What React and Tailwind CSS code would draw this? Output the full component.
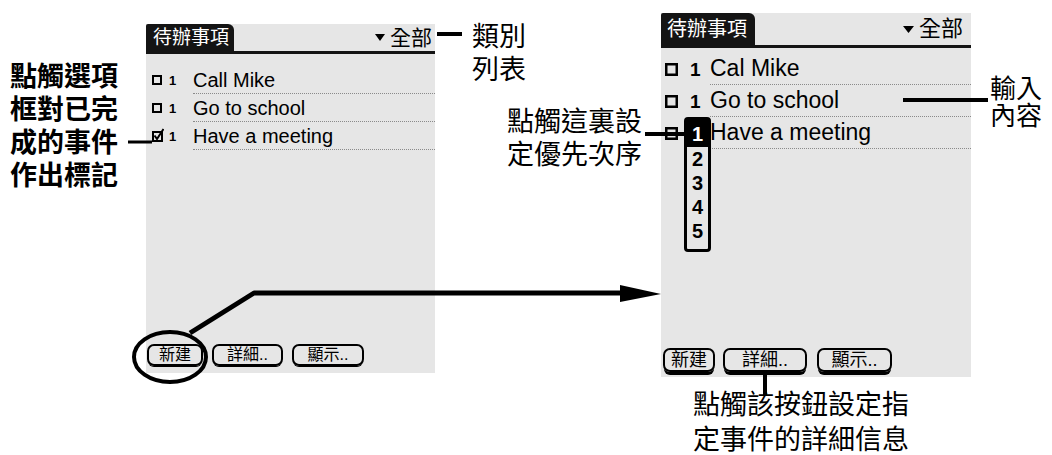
import React from "react";

function Box({ size = 10, stroke = 2 }) {
  return (
    <svg width={size} height={size} viewBox={`0 0 ${size} ${size}`} className="shrink-0">
      <rect x={stroke / 2} y={stroke / 2} width={size - stroke} height={size - stroke} fill="none" stroke="black" strokeWidth={stroke} />
    </svg>
  );
}

function CheckedBox() {
  return (
    <svg width="12" height="14" viewBox="0 0 12 14" className="shrink-0 -mt-[3px]">
      <rect x="1" y="4" width="9" height="9" fill="none" stroke="black" strokeWidth="2" />
      <path d="M2.5 7.5 L5 11 L11.5 1" fill="none" stroke="black" strokeWidth="2" />
    </svg>
  );
}

function Tri({ w = 10, h = 7 }) {
  return (
    <svg width={w} height={h} viewBox={`0 0 ${w} ${h}`} className="shrink-0">
      <path d={`M0 0H${w}L${w / 2} ${h}Z`} fill="black" />
    </svg>
  );
}

function LeftRow({ checked, text }) {
  return (
    <div className="flex items-center h-[28px]">
      <div className="ml-[6px] w-[11px] flex items-center">{checked ? <CheckedBox /> : <Box size={10} stroke={2} />}</div>
      <span className="ml-[6px] w-[10px] font-bold text-[13px] leading-none">1</span>
      <div className="ml-[14px] flex-1 h-full flex items-center border-b border-dotted border-[#8a8a8a] text-[20px] leading-none whitespace-nowrap">
        {text}
      </div>
    </div>
  );
}

function RightRow({ text, hidePriority }) {
  return (
    <div className="flex items-center h-[32px]">
      <div className="ml-[4px] w-[13px] flex items-center"><Box size={13} stroke={2.5} /></div>
      <span className="ml-[12px] w-[12px] font-bold text-[19px] leading-none">{hidePriority ? "" : "1"}</span>
      <div className="ml-[8px] flex-1 h-full flex items-center border-b border-dotted border-[#8a8a8a] text-[23px] leading-none whitespace-nowrap">
        {text}
      </div>
    </div>
  );
}

function LeftBtn({ w, children }) {
  return (
    <div className={`${w} h-[22px] border-2 border-black rounded-[7px] shadow-[0_2px_0_-1px_#000] flex items-center justify-center text-[16px] leading-none whitespace-nowrap`}>
      {children}
    </div>
  );
}

function RightBtn({ w, children }) {
  return (
    <div className={`${w} h-[24px] border-2 border-black rounded-[7px] shadow-[0_4px_0_-1px_#000] flex items-center justify-center text-[18px] leading-none whitespace-nowrap`}>
      {children}
    </div>
  );
}

export default function App() {
  return (
    <div className="relative w-[1052px] h-[455px] bg-white flex items-start overflow-hidden text-black font-['Liberation_Sans','Noto_Sans_CJK_TC',sans-serif]">
      {/* left annotation */}
      <div className="w-[146px] shrink-0 pt-[61px] pl-[10px] text-[27px] leading-[33px] font-bold whitespace-nowrap">
        <div>點觸選項</div>
        <div>框對已完</div>
        <div>成的事件</div>
        <div>作出標記</div>
      </div>

      {/* left screen */}
      <div className="mt-[24px] w-[289px] h-[349px] shrink-0 bg-[#e6e6e6] flex flex-col">
        <div className="h-[30px] flex border-b-[3px] border-[#141414]">
          <div className="w-[88px] bg-[#141414] text-white text-[19px] leading-none pl-[7px] flex items-center rounded-tr-[6px] rounded-tl-[2px] whitespace-nowrap">
            待辦事項
          </div>
          <div className="flex-1 flex items-center justify-end pr-[3px] gap-[5px]">
            <Tri w={10} h={7} />
            <span className="text-[21px] leading-none">全部</span>
          </div>
        </div>
        <div className="mt-[12px] flex flex-col">
          <LeftRow text="Call Mike" />
          <LeftRow text="Go to school" />
          <LeftRow checked text="Have a meeting" />
        </div>
        <div className="mt-auto mb-[7px] ml-[1px] flex gap-[9px]">
          <LeftBtn w="w-[56px]">新建</LeftBtn>
          <LeftBtn w="w-[71px]">詳細..</LeftBtn>
          <LeftBtn w="w-[72px]">顯示..</LeftBtn>
        </div>
      </div>

      {/* middle annotations */}
      <div className="w-[226px] shrink-0 flex flex-col text-[27px] whitespace-nowrap">
        <div className="mt-[21px] ml-[37px] leading-[33px]">
          <div>類別</div>
          <div>列表</div>
        </div>
        <div className="mt-[19px] ml-[72px] leading-[33px]">
          <div>點觸這裏設</div>
          <div>定優先次序</div>
        </div>
      </div>

      {/* right screen + bottom annotation */}
      <div className="w-[310px] shrink-0 flex flex-col">
        <div className="relative mt-[13px] h-[364px] bg-[#e6e6e6] flex flex-col">
          <div className="h-[35px] flex border-b-[3px] border-[#141414]">
            <div className="w-[94px] bg-[#141414] text-white text-[20px] leading-none pl-[6px] flex items-center rounded-tr-[6px] rounded-tl-[2px] whitespace-nowrap">
              待辦事項
            </div>
            <div className="flex-1 flex items-center justify-end pr-[8px] gap-[5px]">
              <Tri w={11} h={7} />
              <span className="text-[22px] leading-none">全部</span>
            </div>
          </div>
          <div className="mt-[5px] flex flex-col">
            <RightRow text="Cal Mike" />
            <RightRow text="Go to school" />
            <RightRow text="Have a meeting" hidePriority />
          </div>
          <div className="mt-auto mb-[5px] ml-[2px] flex">
            <RightBtn w="w-[52px]">新建</RightBtn>
            <div className="ml-[8px]"><RightBtn w="w-[84px]">詳細..</RightBtn></div>
            <div className="ml-[10px]"><RightBtn w="w-[75px]">顯示..</RightBtn></div>
          </div>

          {/* priority popup */}
          <div className="absolute left-[23px] top-[104px] w-[27px] border-[3px] border-black rounded-[4px] bg-[#e6e6e6] flex flex-col items-center pb-[6px] font-bold text-[20px] leading-none">
            <div className="w-full h-[27px] bg-black text-white flex items-center justify-center">1</div>
            <div className="h-[24px] flex items-center">2</div>
            <div className="h-[24px] flex items-center">3</div>
            <div className="h-[24px] flex items-center">4</div>
            <div className="h-[24px] flex items-center">5</div>
          </div>
        </div>
        <div className="mt-[11px] ml-[32px] text-[27px] leading-[35px] whitespace-nowrap">
          <div>點觸該按鈕設定指</div>
          <div>定事件的詳細信息</div>
        </div>
      </div>

      {/* right annotation */}
      <div className="ml-[19px] pt-[76px] text-[26px] leading-[27px] whitespace-nowrap">
        <div>輸入</div>
        <div>內容</div>
      </div>

      {/* leader lines, ellipse and arrow */}
      <svg className="absolute inset-0 pointer-events-none" width="1052" height="455" viewBox="0 0 1052 455">
        <g stroke="black" fill="none" strokeWidth="4">
          <line x1="128" y1="142" x2="152" y2="142" strokeWidth="3" />
          <line x1="437" y1="34" x2="462" y2="34" />
          <line x1="645" y1="134" x2="690" y2="134" />
          <line x1="903" y1="100" x2="988" y2="100" />
          <line x1="765" y1="372" x2="765" y2="396" />
          <ellipse cx="170" cy="357" rx="36" ry="25" />
          <polyline points="190,333 254,293 625,293" strokeWidth="5" strokeLinejoin="round" />
        </g>
        <polygon points="620,285 661,294 620,302" fill="black" />
      </svg>
    </div>
  );
}
